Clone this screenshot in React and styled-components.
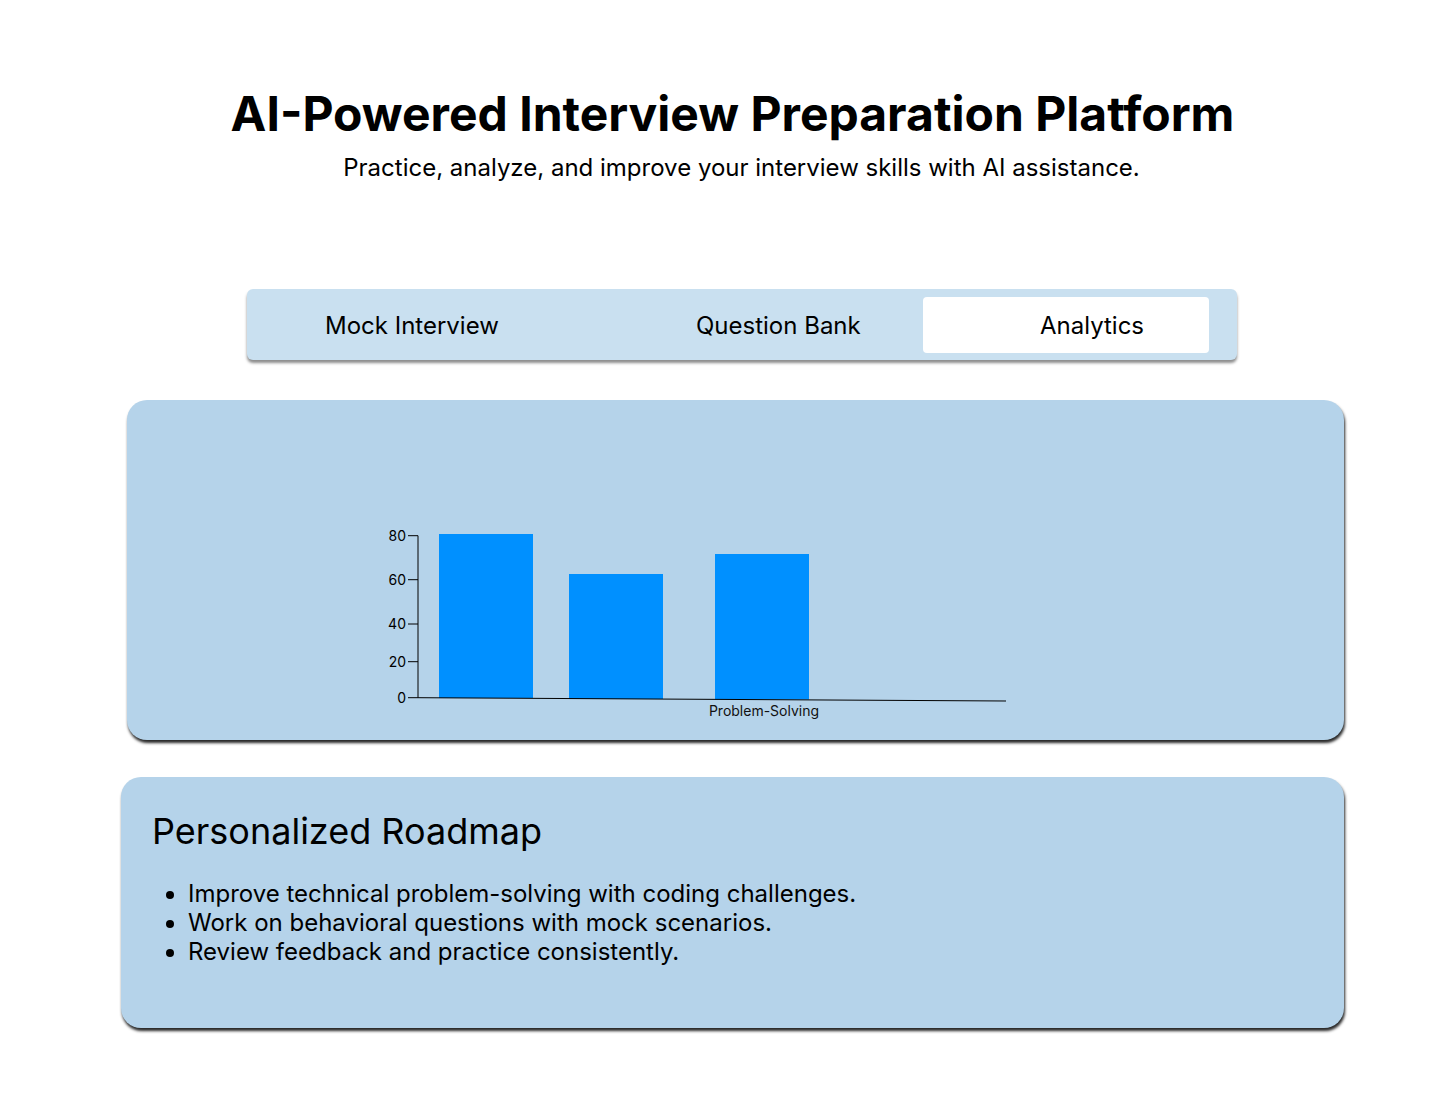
import React from 'react';
import styled, { createGlobalStyle } from 'styled-components';

const GlobalStyle = createGlobalStyle`
  body {
    margin: 0;
    background: #ffffff;
    font-family: Inter, "Noto Sans", sans-serif;
    color: #000000;
  }
`;

const Page = styled.div`
  width: 1223px;
  margin-left: 121px;
  padding-top: 86px;
  padding-bottom: 74px;
`;

const Header = styled.header`
  text-align: center;
`;

const Title = styled.h1`
  margin: 0;
  font-size: 48px;
  font-weight: 700;
  line-height: 56px;
`;

const Subtitle = styled.p`
  margin: 11px 0 0 18px;
  font-size: 24px;
  line-height: 30px;
`;

const TabBar = styled.nav`
  display: grid;
  grid-template-columns: repeat(3, 1fr);
  width: 990px;
  box-sizing: border-box;
  margin: 106px 0 0 126px;
  padding: 8px 9px 7px;
  background: #c9e0f0;
  border-radius: 6px;
  box-shadow: 0 3px 3px rgba(0, 0, 0, 0.45);
`;

const Tab = styled.button`
  height: 56px;
  margin: 0 ${p => (p.$active ? 19 : 0)}px;
  border: none;
  border-radius: 4px;
  background: ${p => (p.$active ? '#ffffff' : 'transparent')};
  font-family: inherit;
  font-size: 24px;
  color: #000000;
  text-align: left;
  padding: 0 0 0 ${p => p.$indent}px;
  cursor: pointer;
`;

const Card = styled.section`
  box-sizing: border-box;
  margin-left: ${p => p.$offset || 0}px;
  height: ${p => p.$height}px;
  background: #b5d3ea;
  border-radius: 20px;
  box-shadow: 1px 3px 3px rgba(0, 0, 0, 0.85);
`;

const ChartCard = styled(Card)`
  margin-top: 40px;
  padding: 120px 0 0 253px;
`;

const RoadmapCard = styled(Card)`
  margin-top: 37px;
  padding: 32px 31px;
`;

const RoadmapTitle = styled.h2`
  margin: 0;
  font-size: 36px;
  font-weight: 400;
  line-height: 44px;
`;

const Steps = styled.ul`
  margin: 26px 0 0;
  padding-left: 36px;
  font-size: 24px;
  line-height: 29px;
`;

const ticks = [
  { label: '80', y: 15.7 },
  { label: '60', y: 59.7 },
  { label: '40', y: 104 },
  { label: '20', y: 141.7 },
  { label: '0', y: 177.7 },
];

const bars = [
  { x: 59, top: 14, bottom: 178 },
  { x: 189, top: 54, bottom: 179 },
  { x: 335, top: 34, bottom: 179.5 },
];

const ScoreChart = () => (
  <svg width="640" height="200" viewBox="0 0 640 200">
    {bars.map(b => (
      <rect key={b.x} x={b.x} y={b.top} width="94" height={b.bottom - b.top} fill="#0090ff" />
    ))}
    <line x1="38" y1="15.7" x2="38" y2="177.7" stroke="#000" strokeWidth="1" />
    <line x1="38" y1="177.7" x2="626" y2="181" stroke="#000" strokeWidth="1" />
    {ticks.map(t => (
      <g key={t.label}>
        <line x1="28" y1={t.y} x2="38" y2={t.y} stroke="#000" strokeWidth="1" />
        <text
          x="26"
          y={t.y + 5}
          textAnchor="end"
          fontSize="14"
          fontFamily="Inter, sans-serif"
          fill="#000"
        >
          {t.label}
        </text>
      </g>
    ))}
    <text x="384" y="196" textAnchor="middle" fontSize="14" fontFamily="Inter, sans-serif" fill="#111">
      Problem-Solving
    </text>
  </svg>
);

const tabs = [
  { name: 'Mock Interview', indent: 69 },
  { name: 'Question Bank', indent: 116 },
  { name: 'Analytics', indent: 117, active: true },
];

const App = () => (
  <>
    <GlobalStyle />
    <Page>
      <Header>
        <Title>AI-Powered Interview Preparation Platform</Title>
        <Subtitle>Practice, analyze, and improve your interview skills with AI assistance.</Subtitle>
      </Header>

      <TabBar>
        {tabs.map(t => (
          <Tab key={t.name} $active={t.active} $indent={t.indent}>
            {t.name}
          </Tab>
        ))}
      </TabBar>

      <ChartCard $offset={6} $height={340}>
        <ScoreChart />
      </ChartCard>

      <RoadmapCard $height={251}>
        <RoadmapTitle>Personalized Roadmap</RoadmapTitle>
        <Steps>
          <li>Improve technical problem-solving with coding challenges.</li>
          <li>Work on behavioral questions with mock scenarios.</li>
          <li>Review feedback and practice consistently.</li>
        </Steps>
      </RoadmapCard>
    </Page>
  </>
);

export default App;
